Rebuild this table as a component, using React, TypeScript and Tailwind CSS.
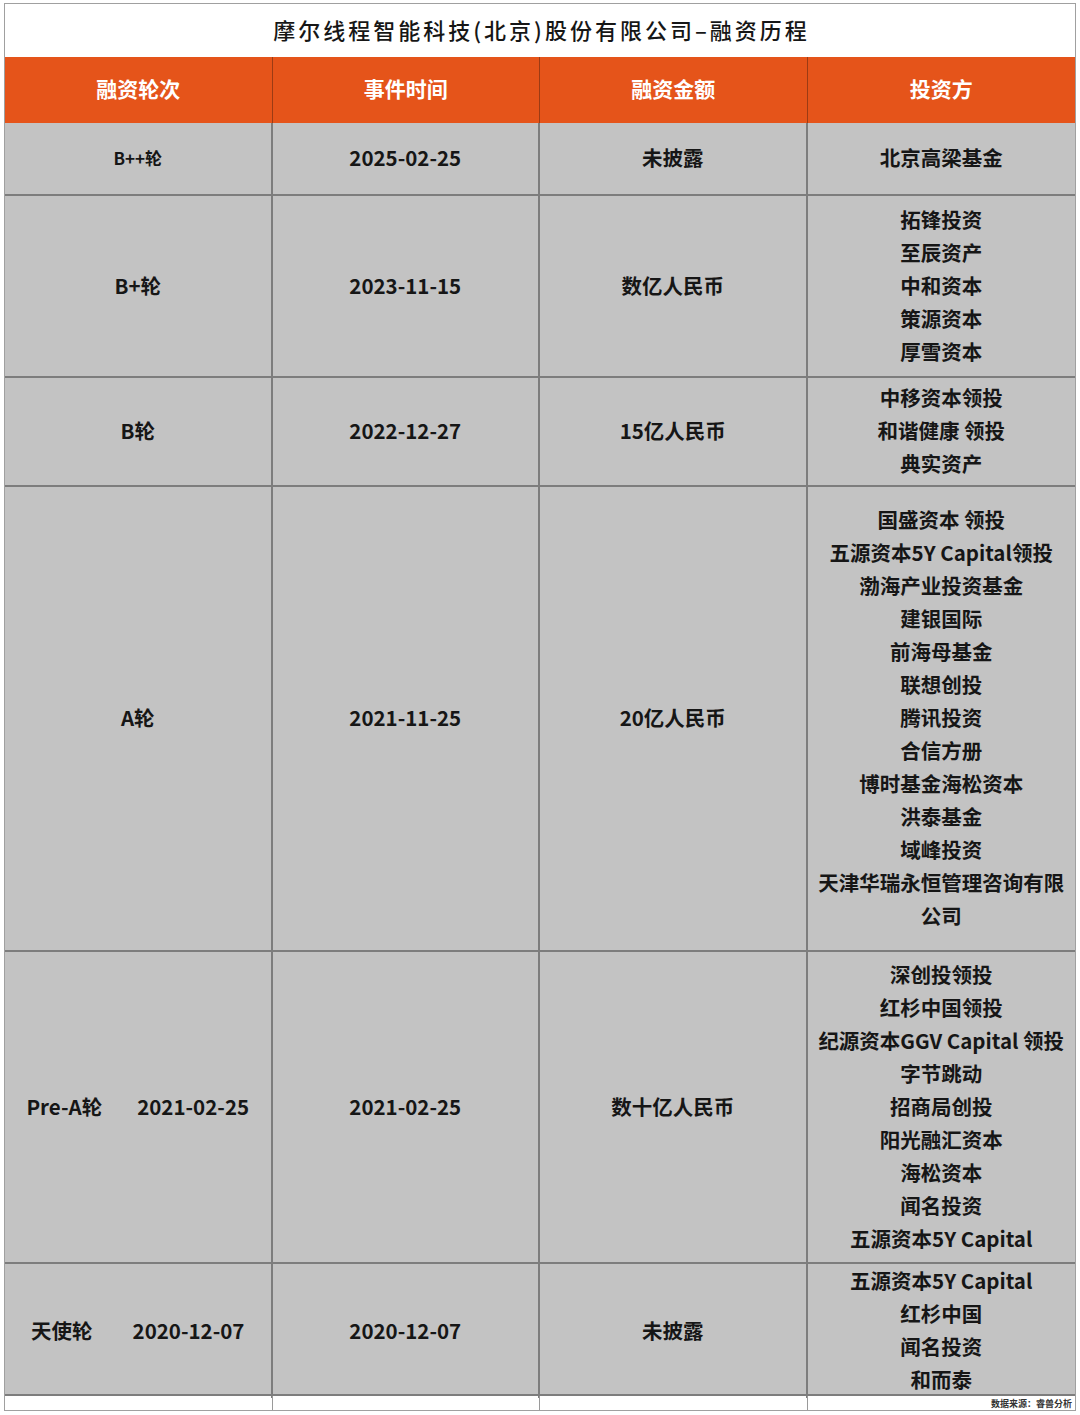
const font = { fontFamily: '"Noto Sans CJK SC", "Noto Sans", sans-serif' };

type Row = {
  round: React.ReactNode;
  date: string;
  amount: string;
  investors: string[];
  h: string;
};

const rows: Row[] = [
  { round: <span className="text-[17px]">B++轮</span>, date: '2025-02-25', amount: '未披露', investors: ['北京高梁基金'], h: 'h-[73px]' },
  { round: 'B+轮', date: '2023-11-15', amount: '数亿人民币', investors: ['拓锋投资', '至辰资产', '中和资本', '策源资本', '厚雪资本'], h: 'h-[182px]' },
  { round: 'B轮', date: '2022-12-27', amount: '15亿人民币', investors: ['中移资本领投', '和谐健康 领投', '典实资产'], h: 'h-[109px]' },
  {
    round: 'A轮',
    date: '2021-11-25',
    amount: '20亿人民币',
    investors: [
      '国盛资本 领投',
      '五源资本5Y Capital领投',
      '渤海产业投资基金',
      '建银国际',
      '前海母基金',
      '联想创投',
      '腾讯投资',
      '合信方册',
      '博时基金海松资本',
      '洪泰基金',
      '域峰投资',
      '天津华瑞永恒管理咨询有限',
      '公司',
    ],
    h: 'h-[465px]',
  },
  {
    round: (
      <span className="flex gap-[35px]">
        <span>Pre-A轮</span>
        <span>2021-02-25</span>
      </span>
    ),
    date: '2021-02-25',
    amount: '数十亿人民币',
    investors: ['深创投领投', '红杉中国领投', '纪源资本GGV Capital 领投', '字节跳动', '招商局创投', '阳光融汇资本', '海松资本', '闻名投资', '五源资本5Y Capital'],
    h: 'h-[312px]',
  },
  {
    round: (
      <span className="flex gap-[40px]">
        <span>天使轮</span>
        <span>2020-12-07</span>
      </span>
    ),
    date: '2020-12-07',
    amount: '未披露',
    investors: ['五源资本5Y Capital', '红杉中国', '闻名投资', '和而泰'],
    h: 'h-[132px]',
  },
];

export default function App() {
  return (
    <div className="w-[1080px] h-[1415px] bg-white pt-[3px] pl-[4px]" style={font}>
      <div className="w-[1072px] border border-[#a0a0a0] text-[#161616]">
        {/* Title */}
        <div className="h-[53px] flex items-center justify-center pb-[2px] text-[22px] font-medium tracking-[3px] pl-[3px]">
          摩尔线程智能科技(北京)股份有限公司–融资历程
        </div>

        {/* Header */}
        <div className="grid grid-cols-4 h-[66px] bg-[#e5541a] text-white text-[21px] font-bold">
          {['融资轮次', '事件时间', '融资金额', '投资方'].map((t, i) => (
            <div
              key={t}
              className={`flex items-center justify-center pb-[3px] ${i < 3 ? 'border-r border-[#9c3b14]' : ''}`}
            >
              {t}
            </div>
          ))}
        </div>

        {/* Rows */}
        {rows.map((r) => (
          <div key={r.date + r.amount} className={`grid grid-cols-4 ${r.h} bg-[#c3c3c3] border-b-2 border-[#7d7d7d] text-[20.5px] font-bold`}>
            <div className="flex items-center justify-center pb-[2px] border-r-2 border-[#7d7d7d]">{r.round}</div>
            <div className="flex items-center justify-center pb-[2px] border-r-2 border-[#7d7d7d]">{r.date}</div>
            <div className="flex items-center justify-center pb-[2px] border-r-2 border-[#7d7d7d]">{r.amount}</div>
            <div className="flex flex-col items-center justify-center pb-[2px] px-1 text-center leading-[33px]">
              {r.investors.map((n, i) => (
                <div key={i} className="whitespace-nowrap">{n}</div>
              ))}
            </div>
          </div>
        ))}

        {/* Footer */}
        <div className="grid grid-cols-4 h-[14px] bg-white">
          <div className="border-r border-[#9a9a9a]" />
          <div className="border-r border-[#9a9a9a]" />
          <div className="border-r border-[#9a9a9a]" />
          <div className="flex items-center justify-end pr-[3px] text-[9px] leading-none font-bold text-[#333]">
            数据来源：睿兽分析
          </div>
        </div>
      </div>
    </div>
  );
}
